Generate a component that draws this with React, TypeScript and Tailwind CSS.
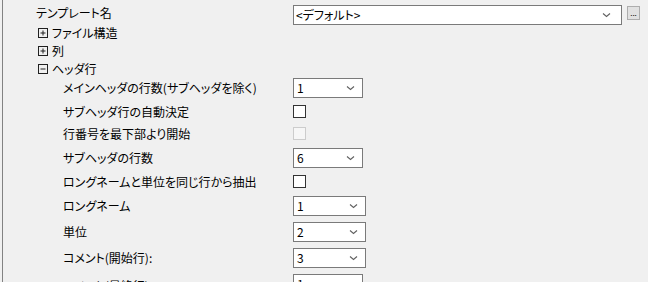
import React from "react";

const font = {
  fontFamily: '"Noto Sans CJK JP", "Noto Sans", sans-serif',
};

function Chevron() {
  return (
    <svg width="9" height="6" viewBox="0 0 9 6" className="shrink-0">
      <path d="M1 1.5 L4.5 4.5 L8 1.5" fill="none" stroke="#606060" strokeWidth="1.1" />
    </svg>
  );
}

function Combo({ value, width }: { value: string; width: string }) {
  return (
    <div
      className={`flex h-[20px] ${width} items-center justify-between border border-[#7a7a7a] bg-white pl-[3px] pr-[7px] text-[12px] leading-none text-black`}
    >
      <span>{value}</span>
      <Chevron />
    </div>
  );
}

function Check({ disabled }: { disabled?: boolean }) {
  return (
    <div
      className={
        disabled
          ? "h-[13px] w-[13px] border border-[#cccccc] bg-[#f6f6f6]"
          : "h-[13px] w-[13px] border border-[#333333] bg-white"
      }
    />
  );
}

function ExpandBox({ open }: { open?: boolean }) {
  return (
    <svg width="10" height="10" viewBox="0 0 10 10" className="mr-[4px] shrink-0">
      <rect x="0.5" y="0.5" width="9" height="9" fill="none" stroke="#202020" />
      <line x1="2.5" y1="5" x2="7.5" y2="5" stroke="#202020" />
      {!open && <line x1="5" y1="2.5" x2="5" y2="7.5" stroke="#202020" />}
    </svg>
  );
}

type Row = {
  label: string;
  h: string;
  ctrl: React.ReactNode;
};

const rows: Row[] = [
  { label: "メインヘッダの行数(サブヘッダを除く)", h: "h-[20px]", ctrl: <Combo value="1" width="w-[70px]" /> },
  { label: "サブヘッダ行の自動決定", h: "h-[27px]", ctrl: <Check /> },
  { label: "行番号を最下部より開始", h: "h-[17px]", ctrl: <Check disabled /> },
  { label: "サブヘッダの行数", h: "h-[32px]", ctrl: <Combo value="6" width="w-[70px]" /> },
  { label: "ロングネームと単位を同じ行から抽出", h: "h-[15px]", ctrl: <Check /> },
  { label: "ロングネーム", h: "h-[33px]", ctrl: <Combo value="1" width="w-[73px]" /> },
  { label: "単位", h: "h-[20px]", ctrl: <Combo value="2" width="w-[73px]" /> },
  { label: "コメント(開始行):", h: "h-[32px]", ctrl: <Combo value="3" width="w-[73px]" /> },
];

export default function App() {
  return (
    <div
      className="flex h-[282px] w-[648px] overflow-hidden bg-[#f0f0f0] text-[12px] text-black [font-feature-settings:'palt']"
      style={font}
    >
      <div className="ml-[2px] h-full border-l border-[#828282]" />
      <div className="flex flex-1 flex-col">
        {/* template name */}
        <div className="flex h-[24px] items-start">
          <div className="w-[290px] pl-[33px] pt-[5px] leading-[16px]">テンプレート名</div>
          <div className="mt-[5px] flex h-[20px] w-[329px] items-center justify-between border border-[#7a7a7a] bg-white pl-[2px] pr-[10px] leading-none">
            <span>&lt;デフォルト&gt;</span>
            <Chevron />
          </div>
          <div className="ml-[5px] mt-[6px] flex h-[14px] w-[13px] items-end justify-center border border-[#adadad] bg-[#e1e1e1] pb-[2px] text-[8px] leading-none">
            ...
          </div>
        </div>

        {/* tree nodes */}
        <div className="flex h-[19px] items-center pl-[35px]">
          <ExpandBox />
          <span>ファイル構造</span>
        </div>
        <div className="flex h-[19px] items-center pl-[35px]">
          <ExpandBox />
          <span>列</span>
        </div>
        <div className="flex h-[19px] items-center pl-[35px]">
          <ExpandBox open />
          <span>ヘッダ行</span>
        </div>

        {rows.map((r, i) => (
          <div key={i} className={`flex ${r.h} shrink-0 items-center`}>
            <div className="w-[290px] pl-[60px] whitespace-nowrap">{r.label}</div>
            {r.ctrl}
          </div>
        ))}

        <div className="flex shrink-0 items-start">
          <div className="w-[290px] pl-[60px] pt-[3px] whitespace-nowrap">コメント(最終行):</div>
          <Combo value="1" width="w-[70px]" />
        </div>
      </div>
    </div>
  );
}
